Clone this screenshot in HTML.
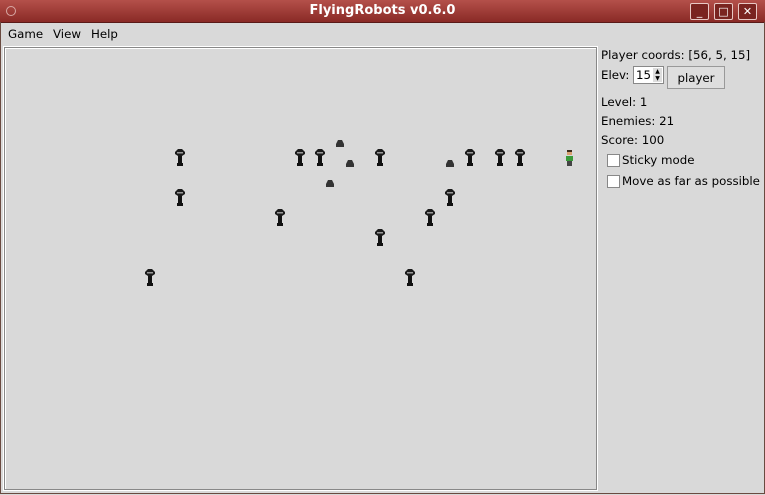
<!DOCTYPE html>
<html><head><style>
body{margin:0;width:765px;height:495px;background:#d9d9d9;font-family:"DejaVu Sans","Liberation Sans",sans-serif;font-size:12px;color:#000;position:relative;overflow:hidden}
.a{position:absolute}
#title{left:0;top:0;width:765px;height:22px;background:linear-gradient(#b4504a,#8a2a26);border-bottom:1px solid #5a1a18;color:#fff;font-weight:bold;font-size:13px;text-align:center;line-height:22px}
.wb{top:3px;width:17px;height:15px;border:1px solid #e8c8c4;border-radius:2px;background:#7a2420;color:#fff;font-size:11px;line-height:15px;text-align:center}
#frame{left:0;top:22px;width:763px;height:471px;border:1px solid #6a4a40;border-top:none}
#game{left:4px;top:47px;width:591px;height:441px;border:1px solid #888;box-shadow:inset 1px 1px 0 #fff;outline:1px solid #fff}
.t{font-size:11.8px}
.cb{width:11px;height:11px;background:#fff;border:1px solid #888}
</style></head><body>
<div id="title" class="a">FlyingRobots v0.6.0</div>
<div class="a" style="left:6px;top:6px;width:8px;height:8px;border-radius:50%;border:1px solid #d8a8a4"></div>
<div class="a wb" style="left:690px">_</div>
<div class="a wb" style="left:714px">□</div>
<div class="a wb" style="left:738px">✕</div>
<div id="frame" class="a"></div>
<div class="a t" style="left:8px;top:27px">Game</div>
<div class="a t" style="left:53px;top:27px">View</div>
<div class="a t" style="left:91px;top:27px">Help</div>
<div id="game" class="a"></div>
<div class="a t" style="left:601px;top:48px">Player coords: [56, 5, 15]</div>
<div class="a t" style="left:601px;top:68px">Elev:</div>
<div class="a" style="left:633px;top:66px;width:31px;height:18px;background:#fff;border:1px solid #888;box-sizing:border-box"><span class="t" style="position:absolute;left:2px;top:1px">15</span><div style="position:absolute;right:1px;top:1px;width:9px;height:14px;background:#ddd;font-size:6px;line-height:7px;text-align:center">▲<br>▼</div></div>
<div class="a t" style="left:667px;top:66px;width:58px;height:23px;border:1px solid #999;box-sizing:border-box;background:#dedede;text-align:center;line-height:22px">player</div>
<div class="a t" style="left:601px;top:95px">Level: 1</div>
<div class="a t" style="left:601px;top:114px">Enemies: 21</div>
<div class="a t" style="left:601px;top:133px">Score: 100</div>
<div class="a cb" style="left:607px;top:154px"></div>
<div class="a t" style="left:622px;top:153px">Sticky mode</div>
<div class="a cb" style="left:607px;top:175px"></div>
<div class="a t" style="left:622px;top:174px">Move as far as possible</div>
<svg class="a" style="left:0;top:0" width="765" height="495">
<defs>
<g id="rb"><path d="M3 0h4l3 3v2l-3 2H3L0 5V3z" fill="#1a1a1a"/><rect x="2" y="3" width="6" height="1.5" fill="#999"/><rect x="3" y="7" width="4" height="7" fill="#111"/><rect x="2" y="14" width="6" height="3" fill="#111"/></g>
<g id="rub"><path d="M2 0h4l2 4v3H0V4z" fill="#333"/></g>
</defs>
<use href="#rb" x="175" y="149"/><use href="#rb" x="295" y="149"/><use href="#rb" x="315" y="149"/><use href="#rb" x="375" y="149"/><use href="#rb" x="465" y="149"/><use href="#rb" x="495" y="149"/><use href="#rb" x="515" y="149"/>
<use href="#rb" x="175" y="189"/><use href="#rb" x="445" y="189"/>
<use href="#rb" x="275" y="209"/><use href="#rb" x="425" y="209"/>
<use href="#rb" x="375" y="229"/>
<use href="#rb" x="145" y="269"/><use href="#rb" x="405" y="269"/>
<use href="#rub" x="336" y="140"/><use href="#rub" x="346" y="160"/><use href="#rub" x="326" y="180"/><use href="#rub" x="446" y="160"/>
<rect x="567" y="150" width="5" height="5" fill="#3a2a1a"/><rect x="567" y="152" width="5" height="3" fill="#d8a070"/><rect x="566" y="156" width="7" height="5" fill="#3a9a3a"/><rect x="567" y="161" width="5" height="5" fill="#444"/>
</svg>
</body></html>
